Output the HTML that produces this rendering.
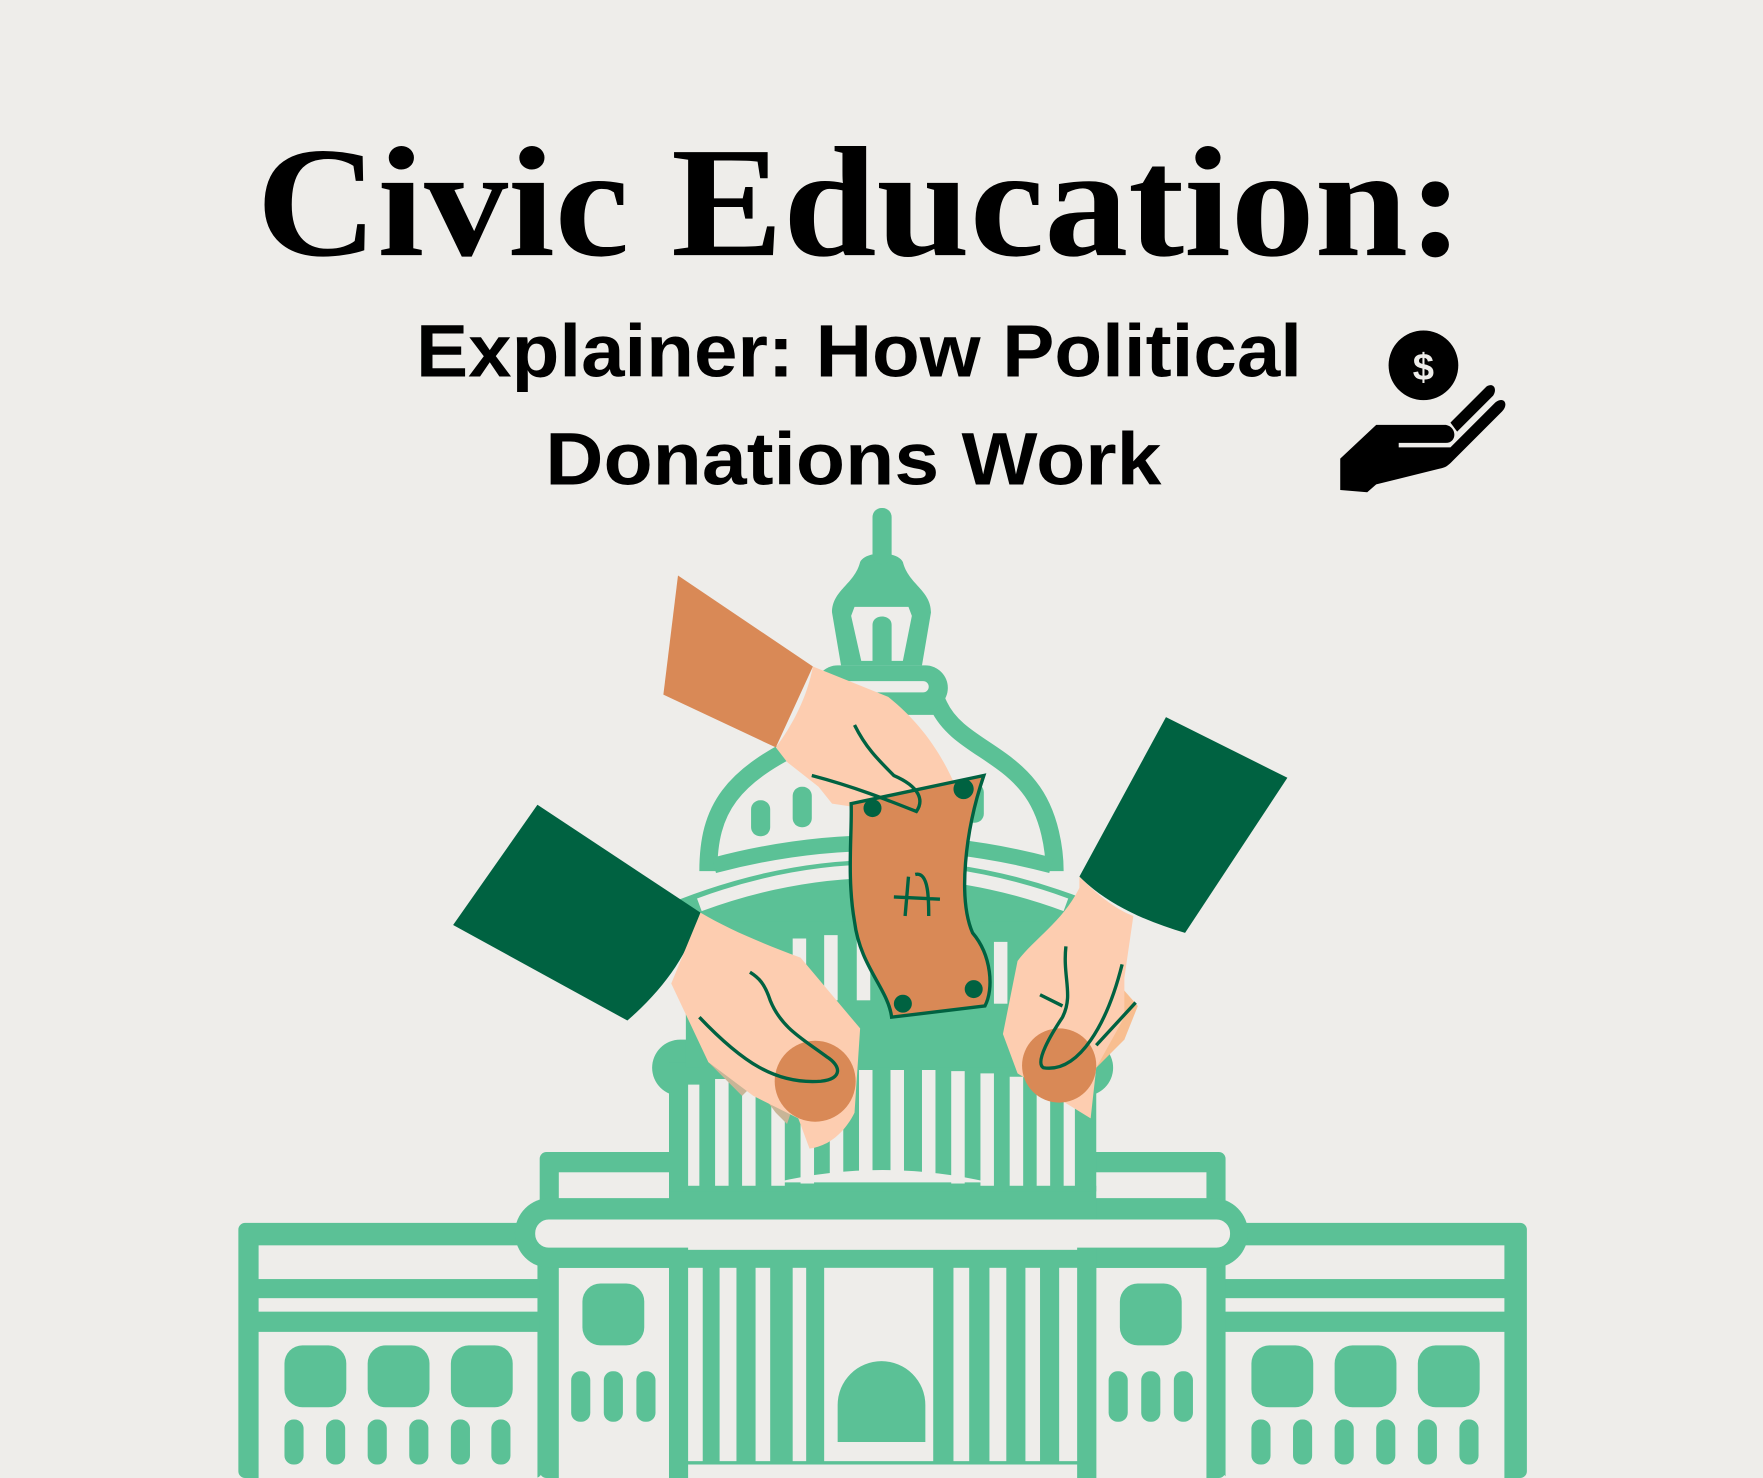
<!DOCTYPE html>
<html><head><meta charset="utf-8"><style>
html,body{margin:0;padding:0;background:#eeedea;}
svg{display:block;}
</style></head><body>
<svg width="1763" height="1478" viewBox="0 0 1568 1315" preserveAspectRatio="none" xmlns="http://www.w3.org/2000/svg">
<rect width="1568" height="1315" fill="#eeedea"/>
<text x="228" y="227" font-family="Liberation Serif, serif" font-weight="bold" font-size="140" textLength="1074" lengthAdjust="spacingAndGlyphs" fill="#000">Civic Education:</text>
<text x="370" y="335" font-family="Liberation Sans, sans-serif" font-weight="bold" font-size="66" textLength="788" lengthAdjust="spacingAndGlyphs" fill="#000">Explainer: How Political</text>
<text x="485" y="431" font-family="Liberation Sans, sans-serif" font-weight="bold" font-size="66" textLength="548" lengthAdjust="spacingAndGlyphs" fill="#000">Donations Work</text>
<!-- icon -->
<circle cx="1266" cy="325" r="31" fill="#000"/>
<text x="1266" y="338" text-anchor="middle" font-family="Liberation Sans, sans-serif" font-weight="bold" font-size="34" fill="#eeedea">$</text>
<path d="M1192,436 L1192,408 L1224,378 L1286,378 C1296,380 1296,394 1286,394 L1244,394 L1244,398 L1290,398 L1330,358 C1338,352 1342,360 1336,366 L1292,410 C1288,414 1286,416 1280,417 L1224,431 L1216,438 Z" fill="#000"/>
<path d="M1290,376 L1322,344 C1328,340 1332,346 1328,352 L1296,384 Z" fill="#000"/>
<g fill="#5bc196">
<!-- wings -->
<rect x="212" y="1088" width="270" height="227" rx="6"/>
<rect x="1088" y="1088" width="270" height="227" rx="6"/>
<rect x="480" y="1025" width="610" height="290" rx="6"/>
</g>
<g fill="#eeedea">
<rect x="230" y="1108" width="248" height="30"/><rect x="230" y="1155" width="248" height="12"/><rect x="230" y="1185" width="248" height="130"/>
<rect x="1090" y="1108" width="248" height="30"/><rect x="1090" y="1155" width="248" height="12"/><rect x="1090" y="1185" width="248" height="130"/>
<rect x="497" y="1043" width="576" height="25"/>
<rect x="497" y="1128" width="98" height="187"/><rect x="975" y="1128" width="98" height="187"/>
</g>
<g fill="#5bc196">
<rect x="253" y="1197" width="55" height="55" rx="16"/><rect x="327" y="1197" width="55" height="55" rx="16"/><rect x="401" y="1197" width="55" height="55" rx="16"/>
<rect x="1113" y="1197" width="55" height="55" rx="16"/><rect x="1187" y="1197" width="55" height="55" rx="16"/><rect x="1261" y="1197" width="55" height="55" rx="16"/>
<rect x="518" y="1142" width="55" height="55" rx="16"/><rect x="996" y="1142" width="55" height="55" rx="16"/>
<rect x="253" y="1263" width="17" height="40" rx="8"/><rect x="290" y="1263" width="17" height="40" rx="8"/><rect x="327" y="1263" width="17" height="40" rx="8"/><rect x="364" y="1263" width="17" height="40" rx="8"/><rect x="401" y="1263" width="17" height="40" rx="8"/><rect x="437" y="1263" width="17" height="40" rx="8"/>
<rect x="1113" y="1263" width="17" height="40" rx="8"/><rect x="1150" y="1263" width="17" height="40" rx="8"/><rect x="1187" y="1263" width="17" height="40" rx="8"/><rect x="1224" y="1263" width="17" height="40" rx="8"/><rect x="1261" y="1263" width="17" height="40" rx="8"/><rect x="1298" y="1263" width="17" height="40" rx="8"/>
<rect x="508" y="1220" width="17" height="45" rx="8"/><rect x="537" y="1220" width="17" height="45" rx="8"/><rect x="566" y="1220" width="17" height="45" rx="8"/>
<rect x="986" y="1220" width="17" height="45" rx="8"/><rect x="1015" y="1220" width="17" height="45" rx="8"/><rect x="1044" y="1220" width="17" height="45" rx="8"/>
<!-- cornice pill -->
<rect x="458" y="1066" width="652" height="62" rx="31"/>
<!-- portico -->
<rect x="595" y="1055" width="380" height="260"/>
</g>
<g fill="#eeedea">
<rect x="476" y="1085" width="618" height="25" rx="12"/>
<rect x="612" y="1098" width="346" height="14"/>
<rect x="612" y="1128" width="13" height="172"/><rect x="640" y="1128" width="15" height="172"/><rect x="672" y="1128" width="13" height="172"/><rect x="705" y="1128" width="12" height="172"/>
<rect x="733" y="1128" width="97" height="172"/>
<rect x="848" y="1128" width="14" height="172"/><rect x="880" y="1128" width="15" height="172"/><rect x="912" y="1128" width="13" height="172"/><rect x="942" y="1128" width="16" height="172"/>
<rect x="612" y="1303" width="346" height="12"/>
</g>
<path d="M745,1283 L745,1250 A39,39 0 0 1 823,1250 L823,1283 Z" fill="#5bc196"/>
<!-- upper colonnade -->
<g fill="#5bc196">
<rect x="580" y="925" width="410" height="50" rx="25"/>
<rect x="595" y="945" width="380" height="115"/>
<path d="M605,800 Q785,730 965,800 L965,830 L605,830 Z"/>
<rect x="610" y="820" width="350" height="130"/>
</g>
<g fill="#eeedea">
<rect x="612" y="965" width="10" height="90"/><rect x="636" y="960" width="12" height="95"/><rect x="660" y="958" width="12" height="97"/><rect x="686" y="955" width="12" height="100"/><rect x="712" y="953" width="12" height="100"/><rect x="738" y="952" width="12" height="98"/><rect x="764" y="952" width="12" height="96"/><rect x="792" y="952" width="12" height="96"/><rect x="820" y="952" width="12" height="98"/><rect x="846" y="953" width="12" height="100"/><rect x="872" y="955" width="12" height="100"/><rect x="898" y="958" width="12" height="97"/><rect x="922" y="960" width="12" height="95"/><rect x="946" y="965" width="10" height="90"/>
<path d="M690,1052 Q785,1030 880,1052 Z"/>
<rect x="705" y="835" width="12" height="55"/><rect x="733" y="832" width="12" height="58"/><rect x="762" y="830" width="12" height="60"/><rect x="796" y="830" width="12" height="60"/><rect x="826" y="832" width="12" height="58"/><rect x="855" y="835" width="12" height="55"/><rect x="884" y="838" width="12" height="55"/>
</g>
<path d="M622,805 Q785,745 948,805" fill="none" stroke="#eeedea" stroke-width="12"/>
<!-- dome -->
<path d="M630,775 C630,720 650,690 720,658 L790,628 L835,628 C850,660 890,668 915,700 C935,725 938,760 938,775" fill="none" stroke="#5bc196" stroke-width="16"/>
<path d="M635,770 Q785,730 935,770" fill="none" stroke="#5bc196" stroke-width="14"/>
<g fill="#5bc196">
<rect x="668" y="712" width="17" height="32" rx="8"/><rect x="705" y="700" width="17" height="36" rx="8"/><rect x="858" y="697" width="17" height="35" rx="8"/>
<rect x="725" y="592" width="118" height="40" rx="20"/>
<path d="M740,545 C740,525 760,520 765,500 C770,490 798,490 803,500 C808,520 828,525 828,545 L820,592 L748,592 Z"/>
<rect x="776" y="452" width="17" height="50" rx="8"/>
</g>
<rect x="743" y="606" width="83" height="10" rx="5" fill="#eeedea"/>
<path d="M760,540 L808,540 L811,548 L803,588 L793,588 L793,556 C793,546 776,546 776,556 L776,588 L766,588 L757,548 Z" fill="#eeedea"/>
<!-- top hand -->
<path d="M603,512 L723,593 L690,665 L590,618 Z" fill="#d98956"/>
<path d="M723,593 L790,620 C815,640 835,665 850,700 L815,725 L760,718 L740,715 L728,700 L700,678 L690,665 C705,645 718,620 723,593 Z" fill="#fdcdb0"/>
<!-- bill -->
<path d="M757,715 L875,690 C858,740 852,800 865,830 C882,850 884,880 876,895 L793,905 C790,880 765,860 760,820 C753,780 758,740 757,715Z" fill="#d98956" stroke="#006241" stroke-width="3"/>
<circle cx="857" cy="702" r="9" fill="#006241"/><circle cx="803" cy="893" r="8" fill="#006241"/><circle cx="866" cy="880" r="8" fill="#006241"/><circle cx="776" cy="719" r="8" fill="#006241"/>
<path d="M808,780 L805,815 M814,778 C826,775 826,800 826,815 M795,798 L836,800" fill="none" stroke="#006241" stroke-width="3"/>
<path d="M722,690 C760,700 790,712 815,722 C822,712 818,700 795,690 C780,675 770,665 760,645" fill="none" stroke="#006241" stroke-width="3"/>
<!-- left hand -->
<path d="M478,716 L623,812 C612,850 590,880 558,908 L403,823 Z" fill="#006241"/>
<path d="M630,910 L660,940 L655,965 L705,985 L700,1000 L690,990" fill="#c8b597"/>
<path d="M622,915 C650,935 660,945 680,955 L660,975 L630,945 Z" fill="#c8b597"/>
<path d="M623,812 C650,828 680,840 712,852 L765,915 L760,990 C750,1010 735,1020 720,1022 L710,995 L670,975 L630,945 L597,875 Z" fill="#fdcdb0"/>
<circle cx="725" cy="962" r="36" fill="#d98956"/>
<path d="M622,905 C660,945 690,965 730,962 C750,960 748,948 735,940 C715,925 695,915 685,890 C680,875 675,870 667,865" fill="none" stroke="#006241" stroke-width="3"/>
<!-- right hand -->
<path d="M1037,638 L1145,692 L1054,830 C1020,820 985,805 960,780 Z" fill="#006241"/>
<path d="M990,870 L1012,895 L1000,925 L975,950 Z" fill="#f8be90"/>
<path d="M960,780 C980,800 995,810 1008,815 L1000,870 L1000,905 L975,950 L970,995 L905,955 L892,920 L905,855 C920,835 945,820 960,790 Z" fill="#fdcdb0"/>
<circle cx="942" cy="948" r="33" fill="#d98956"/>
<path d="M948,842 C945,870 955,885 945,905 C935,920 920,945 928,950 C960,955 985,910 998,858 M925,885 L945,895 M975,930 L1010,892" fill="none" stroke="#006241" stroke-width="3"/>
</svg>
</body></html>
